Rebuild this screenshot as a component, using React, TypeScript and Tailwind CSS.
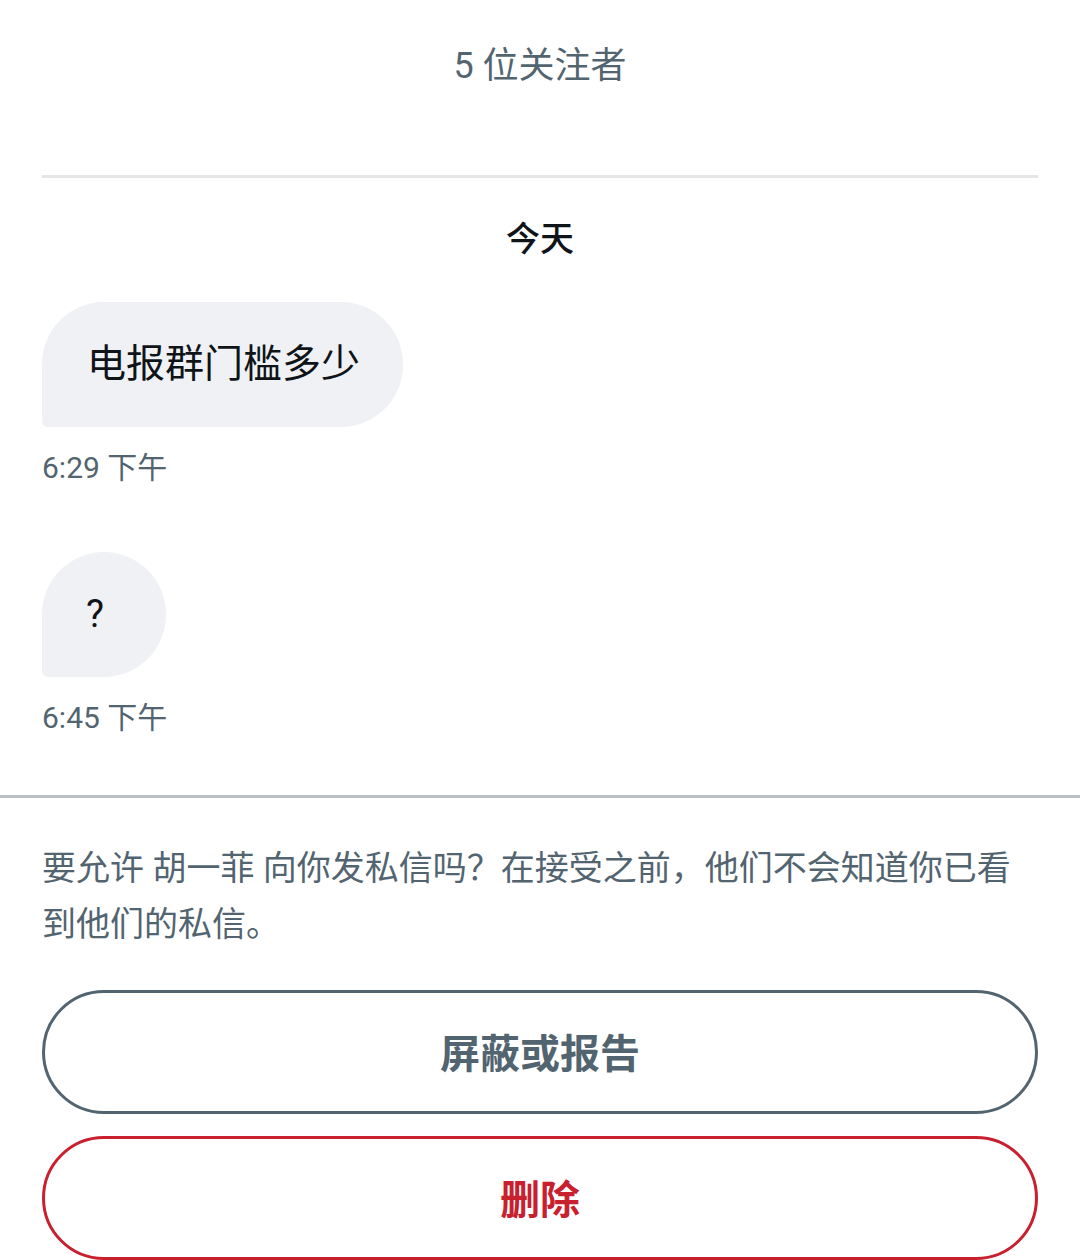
import React from "react";

const font = { fontFamily: 'Roboto, "Noto Sans CJK SC", sans-serif' };

export default function App() {
  return (
    <div className="w-[1080px] h-[1260px] bg-white overflow-hidden font-['Roboto','Noto_Sans_CJK_SC',sans-serif]" style={font}>
      <div className="pt-[38px] h-[175px] text-center">
        <div className="text-[36px] leading-[56px] text-[#536471]">5 位关注者</div>
      </div>
      <div className="mx-[42px] h-[3px] bg-[#e3e5e7]" />
      <div className="mt-[37px] text-center text-[34px] leading-[48px] font-medium text-[#0f1419]">今天</div>
      <div className="px-[42px]">
        <div className="mt-[39px] flex">
          <div className="h-[125px] flex items-center pl-[45px] pr-[43px] bg-[#eff1f4] rounded-[62px] rounded-bl-[6px] text-[39px] text-[#0f1419]">
            电报群门槛多少
          </div>
        </div>
        <div className="mt-[20px] text-[30px] leading-[42px] text-[#536471]">6:29 下午</div>
        <div className="mt-[63px] flex">
          <div className="h-[125px] w-[124px] flex items-center pl-[44px] bg-[#eff1f4] rounded-[62px] rounded-bl-[6px] text-[38px] text-[#0f1419]">
            ?
          </div>
        </div>
        <div className="mt-[20px] text-[30px] leading-[42px] text-[#536471]">6:45 下午</div>
      </div>
      <div className="mt-[56px] h-[3px] bg-[#b9c1c7]" />
      <div className="px-[42px] mt-[42px] text-[34px] leading-[56px] text-[#536471]">
        要允许 胡一菲 向你发私信吗？在接受之前，他们不会知道你已看到他们的私信。
      </div>
      <div className="px-[42px] mt-[38px] flex flex-col gap-[22px]">
        <div className="h-[124px] pt-[6px] rounded-full border-[3px] border-[#536471] flex items-center justify-center text-[40px] font-bold text-[#536471]">
          屏蔽或报告
        </div>
        <div className="h-[124px] pt-[6px] rounded-full border-[3px] border-[#c8202f] flex items-center justify-center text-[40px] font-bold text-[#c8202f]">
          删除
        </div>
      </div>
    </div>
  );
}
